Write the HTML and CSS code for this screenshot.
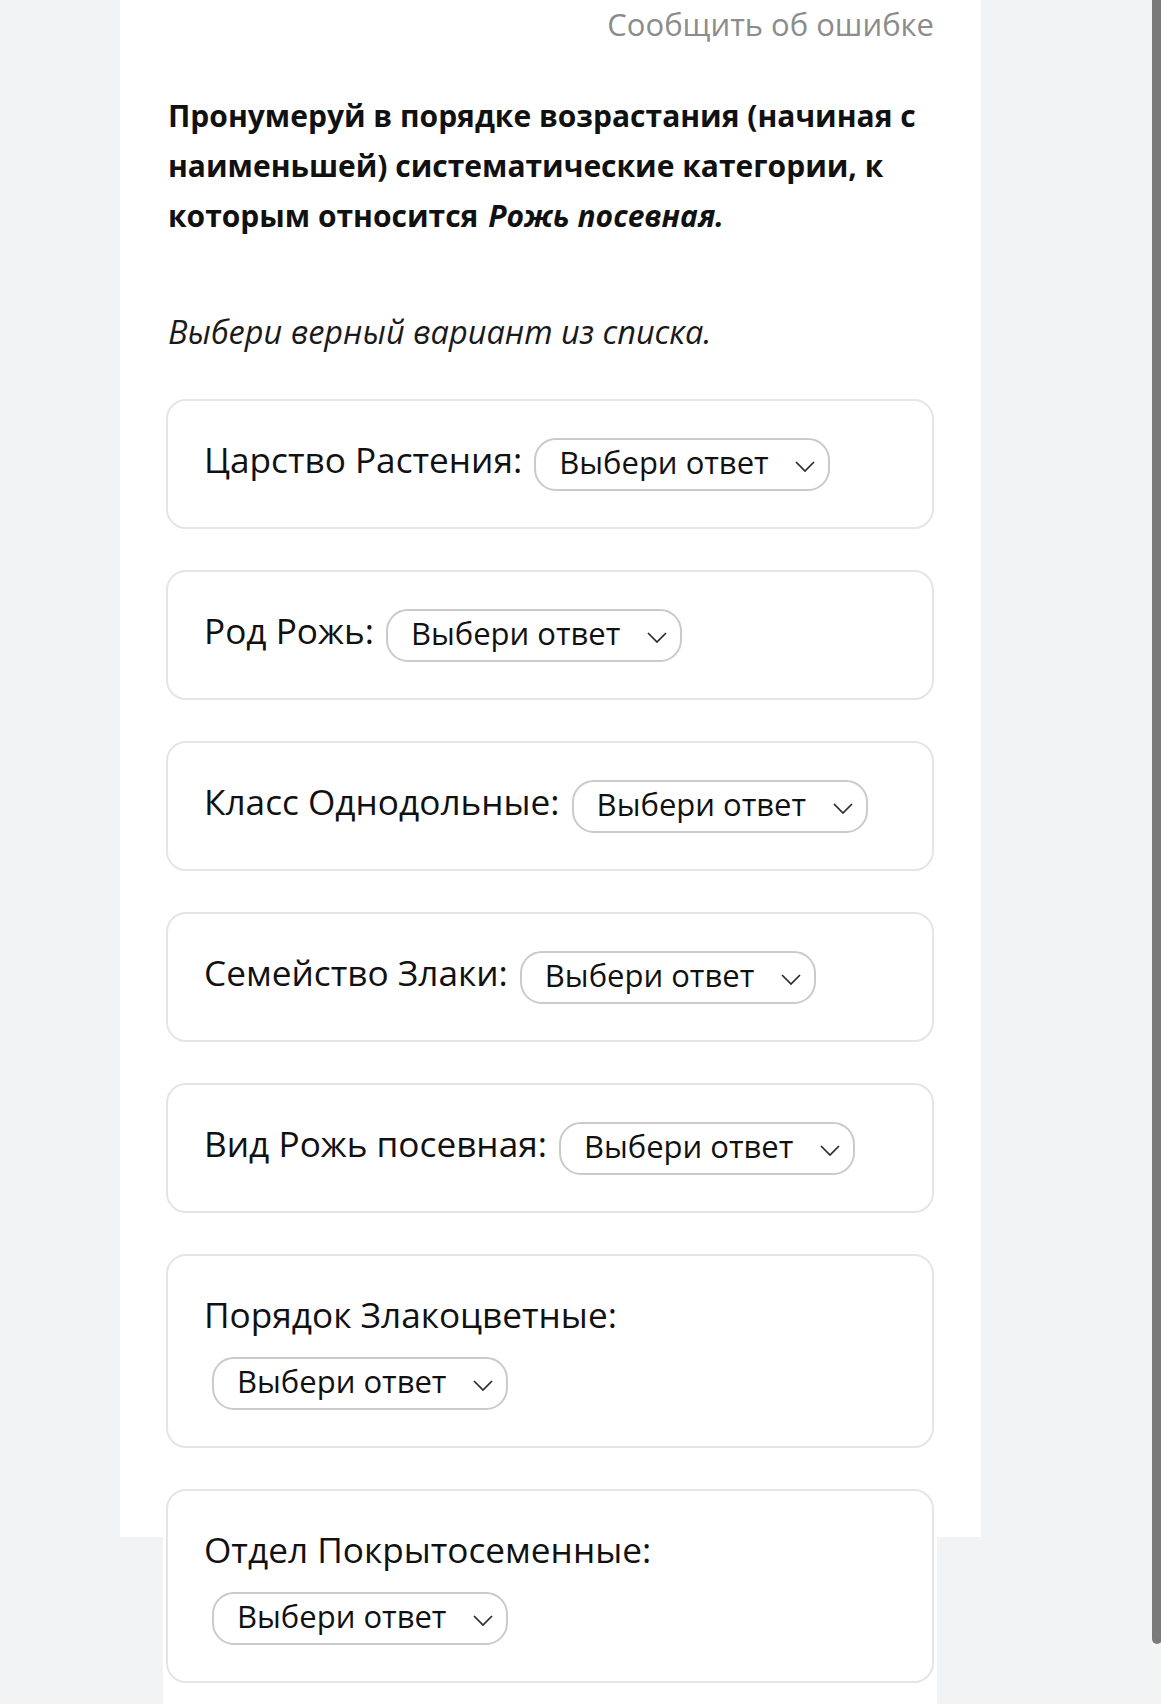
FILE: index.html
```html
<!DOCTYPE html>
<html lang="ru">
<head>
    <meta charset="UTF-8">
    <meta name="viewport" content="width=device-width, initial-scale=1.0">
    <title>Систематические категории</title>
    <link rel="stylesheet" href="styles.css">
</head>
<body>
    <main class="task">
        <div class="task-top">
            <a class="report" href="#">Сообщить об ошибке</a>
        </div>

        <h2 class="question">Пронумеруй в порядке возрастания (начиная с наименьшей) систематические категории, к которым относится <em>Рожь посевная.</em></h2>

        <p class="hint">Выбери верный вариант из списка.</p>

        <ul class="answers">
            <li class="answer">
                <span class="answer-label">Царство Растения:</span>
                <button class="pick" type="button"><span>Выбери ответ</span><svg class="chevron" viewBox="0 0 20 11"><path d="M1 1 L10 10 L19 1"/></svg></button>
            </li>
            <li class="answer">
                <span class="answer-label">Род Рожь:</span>
                <button class="pick" type="button"><span>Выбери ответ</span><svg class="chevron" viewBox="0 0 20 11"><path d="M1 1 L10 10 L19 1"/></svg></button>
            </li>
            <li class="answer">
                <span class="answer-label">Класс Однодольные:</span>
                <button class="pick" type="button"><span>Выбери ответ</span><svg class="chevron" viewBox="0 0 20 11"><path d="M1 1 L10 10 L19 1"/></svg></button>
            </li>
            <li class="answer">
                <span class="answer-label">Семейство Злаки:</span>
                <button class="pick" type="button"><span>Выбери ответ</span><svg class="chevron" viewBox="0 0 20 11"><path d="M1 1 L10 10 L19 1"/></svg></button>
            </li>
            <li class="answer">
                <span class="answer-label">Вид Рожь посевная:</span>
                <button class="pick" type="button"><span>Выбери ответ</span><svg class="chevron" viewBox="0 0 20 11"><path d="M1 1 L10 10 L19 1"/></svg></button>
            </li>
            <li class="answer">
                <span class="answer-label">Порядок Злакоцветные:</span>
                <button class="pick" type="button"><span>Выбери ответ</span><svg class="chevron" viewBox="0 0 20 11"><path d="M1 1 L10 10 L19 1"/></svg></button>
            </li>
            <li class="answer">
                <span class="answer-label">Отдел Покрытосеменные:</span>
                <button class="pick" type="button"><span>Выбери ответ</span><svg class="chevron" viewBox="0 0 20 11"><path d="M1 1 L10 10 L19 1"/></svg></button>
            </li>
        </ul>
    </main>

    <div class="scrollbar"></div>
</body>
</html>
```

FILE: styles.css
```css
html, body {
    margin: 0;
    padding: 0;
    height: 100%;
    overflow: hidden;
}

body {
    font-family: "Open Sans", "Noto Sans", sans-serif;
    background-color: #f2f3f5;
    color: #111;
}

.task {
    box-sizing: border-box;
    width: 861px;
    height: 1537px;
    margin-left: 120px;
    padding: 3px 47px 0 46px;
    background-color: #fff;
}

.task-top {
    text-align: right;
}

.report {
    font-size: 31px;
    line-height: 42px;
    color: #8c8c8c;
    text-decoration: none;
}

.question {
    margin: 46px 0 0;
    padding-left: 2px;
    font-size: 30px;
    font-weight: 700;
    line-height: 50px;
}

.question em {
    font-style: italic;
    padding-left: 2px;
}

.hint {
    margin: 71px 0 0;
    padding-left: 2px;
    font-size: 32.5px;
    font-style: italic;
    line-height: 40px;
    color: #1a1a1a;
}

/* white strip under the cards, a bit wider than the cards */
.answers {
    list-style: none;
    margin: 47px -3px 0;
    padding: 0 3px 200px;
    background-color: #fff;
    display: flex;
    flex-direction: column;
    gap: 41px;
}

.answer {
    display: flex;
    flex-wrap: wrap;
    align-items: center;
    column-gap: 4px;
    row-gap: 11px;
    padding: 36px;
    border: 2px solid #e5e5e5;
    border-radius: 20px;
    background-color: #fff;
}

.answer-label {
    font-size: 35.2px;
    line-height: 44px;
    padding-bottom: 10px;
}

.pick {
    box-sizing: border-box;
    display: flex;
    align-items: center;
    justify-content: space-between;
    width: 296px;
    height: 53px;
    margin-left: 8px;
    padding: 0 13px 5px 23px;
    border: 2px solid #cacaca;
    border-radius: 22px;
    background-color: #fff;
    font-family: "Open Sans", "Noto Sans", sans-serif;
    font-size: 31px;
    color: #111;
    cursor: pointer;
}

.chevron {
    width: 20px;
    height: 11px;
    margin-top: 9px;
    fill: none;
    stroke: #2a2a2a;
    stroke-width: 1.7;
}

.scrollbar {
    position: fixed;
    top: -8px;
    left: 1152px;
    width: 10px;
    height: 1652px;
    border-radius: 5px;
    background-color: #7a7a7a;
}
```
